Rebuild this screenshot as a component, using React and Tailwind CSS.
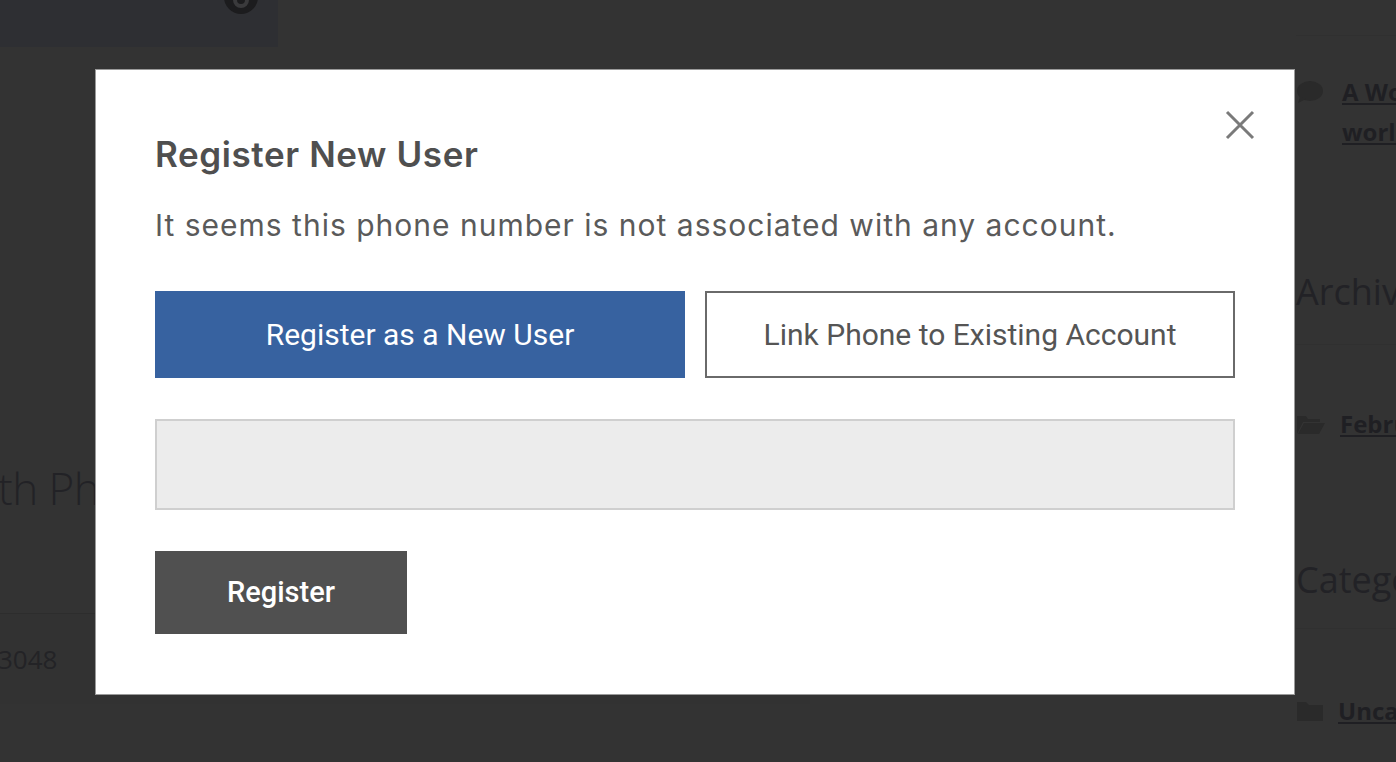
import React from "react";

function CloseIcon() {
  return (
    <svg width="32" height="32" viewBox="0 0 32 32" fill="none" stroke="#7a7a7a" strokeWidth="3" strokeLinecap="butt">
      <path d="M3 3 L29 29 M29 3 L3 29" />
    </svg>
  );
}

export default function App() {
  return (
    <div className="relative w-[1396px] h-[762px] overflow-hidden bg-[#333333] font-['Open_Sans',sans-serif]">
      {/* background page */}
      <div className="flex h-full">
        <div className="w-[1296px] shrink-0 flex flex-col">
          <div className="relative w-[278px] h-[47px] bg-[#2e2f33]">
            <div className="absolute left-[224px] top-[-20px] w-[34px] h-[34px] rounded-full bg-[#1c1c1e] flex items-center justify-center">
              <div className="w-[16px] h-[16px] rounded-full border-[4px] border-[#3a3a3c] mt-[6px]"></div>
            </div>
          </div>
          <div className="mt-[411px] text-[44px] leading-[60px] font-light text-[#222226] tracking-[-0.5px] ml-[-2px] whitespace-nowrap">
            th Phone Number
          </div>
          <div className="mt-[95px] h-[91px] w-[810px] border-t border-[#2d2d2d] bg-[#323232] flex items-center">
            <span className="text-[26px] text-[#232326] ml-[-2px]">3048</span>
          </div>
        </div>
        <div className="w-[400px] shrink-0 flex flex-col">
          <div className="h-[36px] border-b border-[#303030]"></div>
          <div className="flex items-start gap-[18px] mt-[42px]">
            <svg width="28" height="24" viewBox="0 0 28 24" className="shrink-0 mt-[2px]">
              <ellipse cx="14" cy="11" rx="13" ry="10" fill="#2a2a2a" />
              <path d="M4 17 L2 23 L10 19 Z" fill="#2a2a2a" />
            </svg>
            <div className="text-[24px] leading-[40px] font-bold text-[#1f1f23] underline whitespace-nowrap mt-[-6px]">
              A WordPress
              <br />
              world
            </div>
          </div>
          <div className="mt-[120px] text-[36px] text-[#222226] whitespace-nowrap leading-[40px]">Archives</div>
          <div className="mt-[32px] border-t border-[#303030]"></div>
          <div className="flex items-center gap-[14px] mt-[61px]">
            <svg width="30" height="22" viewBox="0 0 30 22" className="shrink-0">
              <path d="M1 3 L10 3 L12 6 L24 6 L24 9 L7 9 L1 21 Z" fill="#2a2a2a" />
              <path d="M8 10 L29 10 L23 21 L2 21 Z" fill="#2a2a2a" />
            </svg>
            <span className="text-[24px] font-bold text-[#1f1f23] underline whitespace-nowrap">February</span>
          </div>
          <div className="mt-[118px] text-[36px] text-[#222226] whitespace-nowrap leading-[40px]">Categories</div>
          <div className="mt-[28px] border-t border-[#303030]"></div>
          <div className="flex items-center gap-[14px] mt-[64px]">
            <svg width="28" height="22" viewBox="0 0 28 22" className="shrink-0">
              <path d="M1 2 L10 2 L13 5 L27 5 L27 21 L1 21 Z" fill="#2a2a2a" />
            </svg>
            <span className="text-[24px] font-bold text-[#1f1f23] underline whitespace-nowrap">Uncategorized</span>
          </div>
        </div>
      </div>

      {/* modal */}
      <div className="absolute left-[95px] top-[69px] w-[1200px] h-[626px] bg-white border border-[#9a9a9a] px-[59px] pt-[63px] font-['Roboto',sans-serif]">
        <button className="absolute right-[38px] top-[39px] w-[32px] h-[32px] flex items-center justify-center">
          <CloseIcon />
        </button>
        <h2 className="font-['Inter',sans-serif] text-[35px] leading-[42px] font-semibold text-[#4f4f4f] tracking-[0.6px]">Register New User</h2>
        <p className="mt-[32px] font-['Inter',sans-serif] text-[30px] leading-[36px] text-[#5a5a5a] tracking-[1px]">
          It seems this phone number is not associated with any account.
        </p>
        <div className="mt-[48px] flex gap-[20px]">
          <button className="w-[530px] h-[87px] bg-[#3762a0] text-white text-[30px] flex items-center justify-center">
            Register as a New User
          </button>
          <button className="w-[530px] h-[87px] bg-white border-2 border-[#6a6a6a] text-[#555555] text-[30px] flex items-center justify-center">
            Link Phone to Existing Account
          </button>
        </div>
        <div className="mt-[41px] w-[1080px] h-[91px] bg-[#ececec] border-2 border-[#cfcfcf]"></div>
        <button className="mt-[41px] w-[252px] h-[83px] bg-[#505050] text-white text-[29px] font-medium flex items-center justify-center">
          Register
        </button>
      </div>
    </div>
  );
}
